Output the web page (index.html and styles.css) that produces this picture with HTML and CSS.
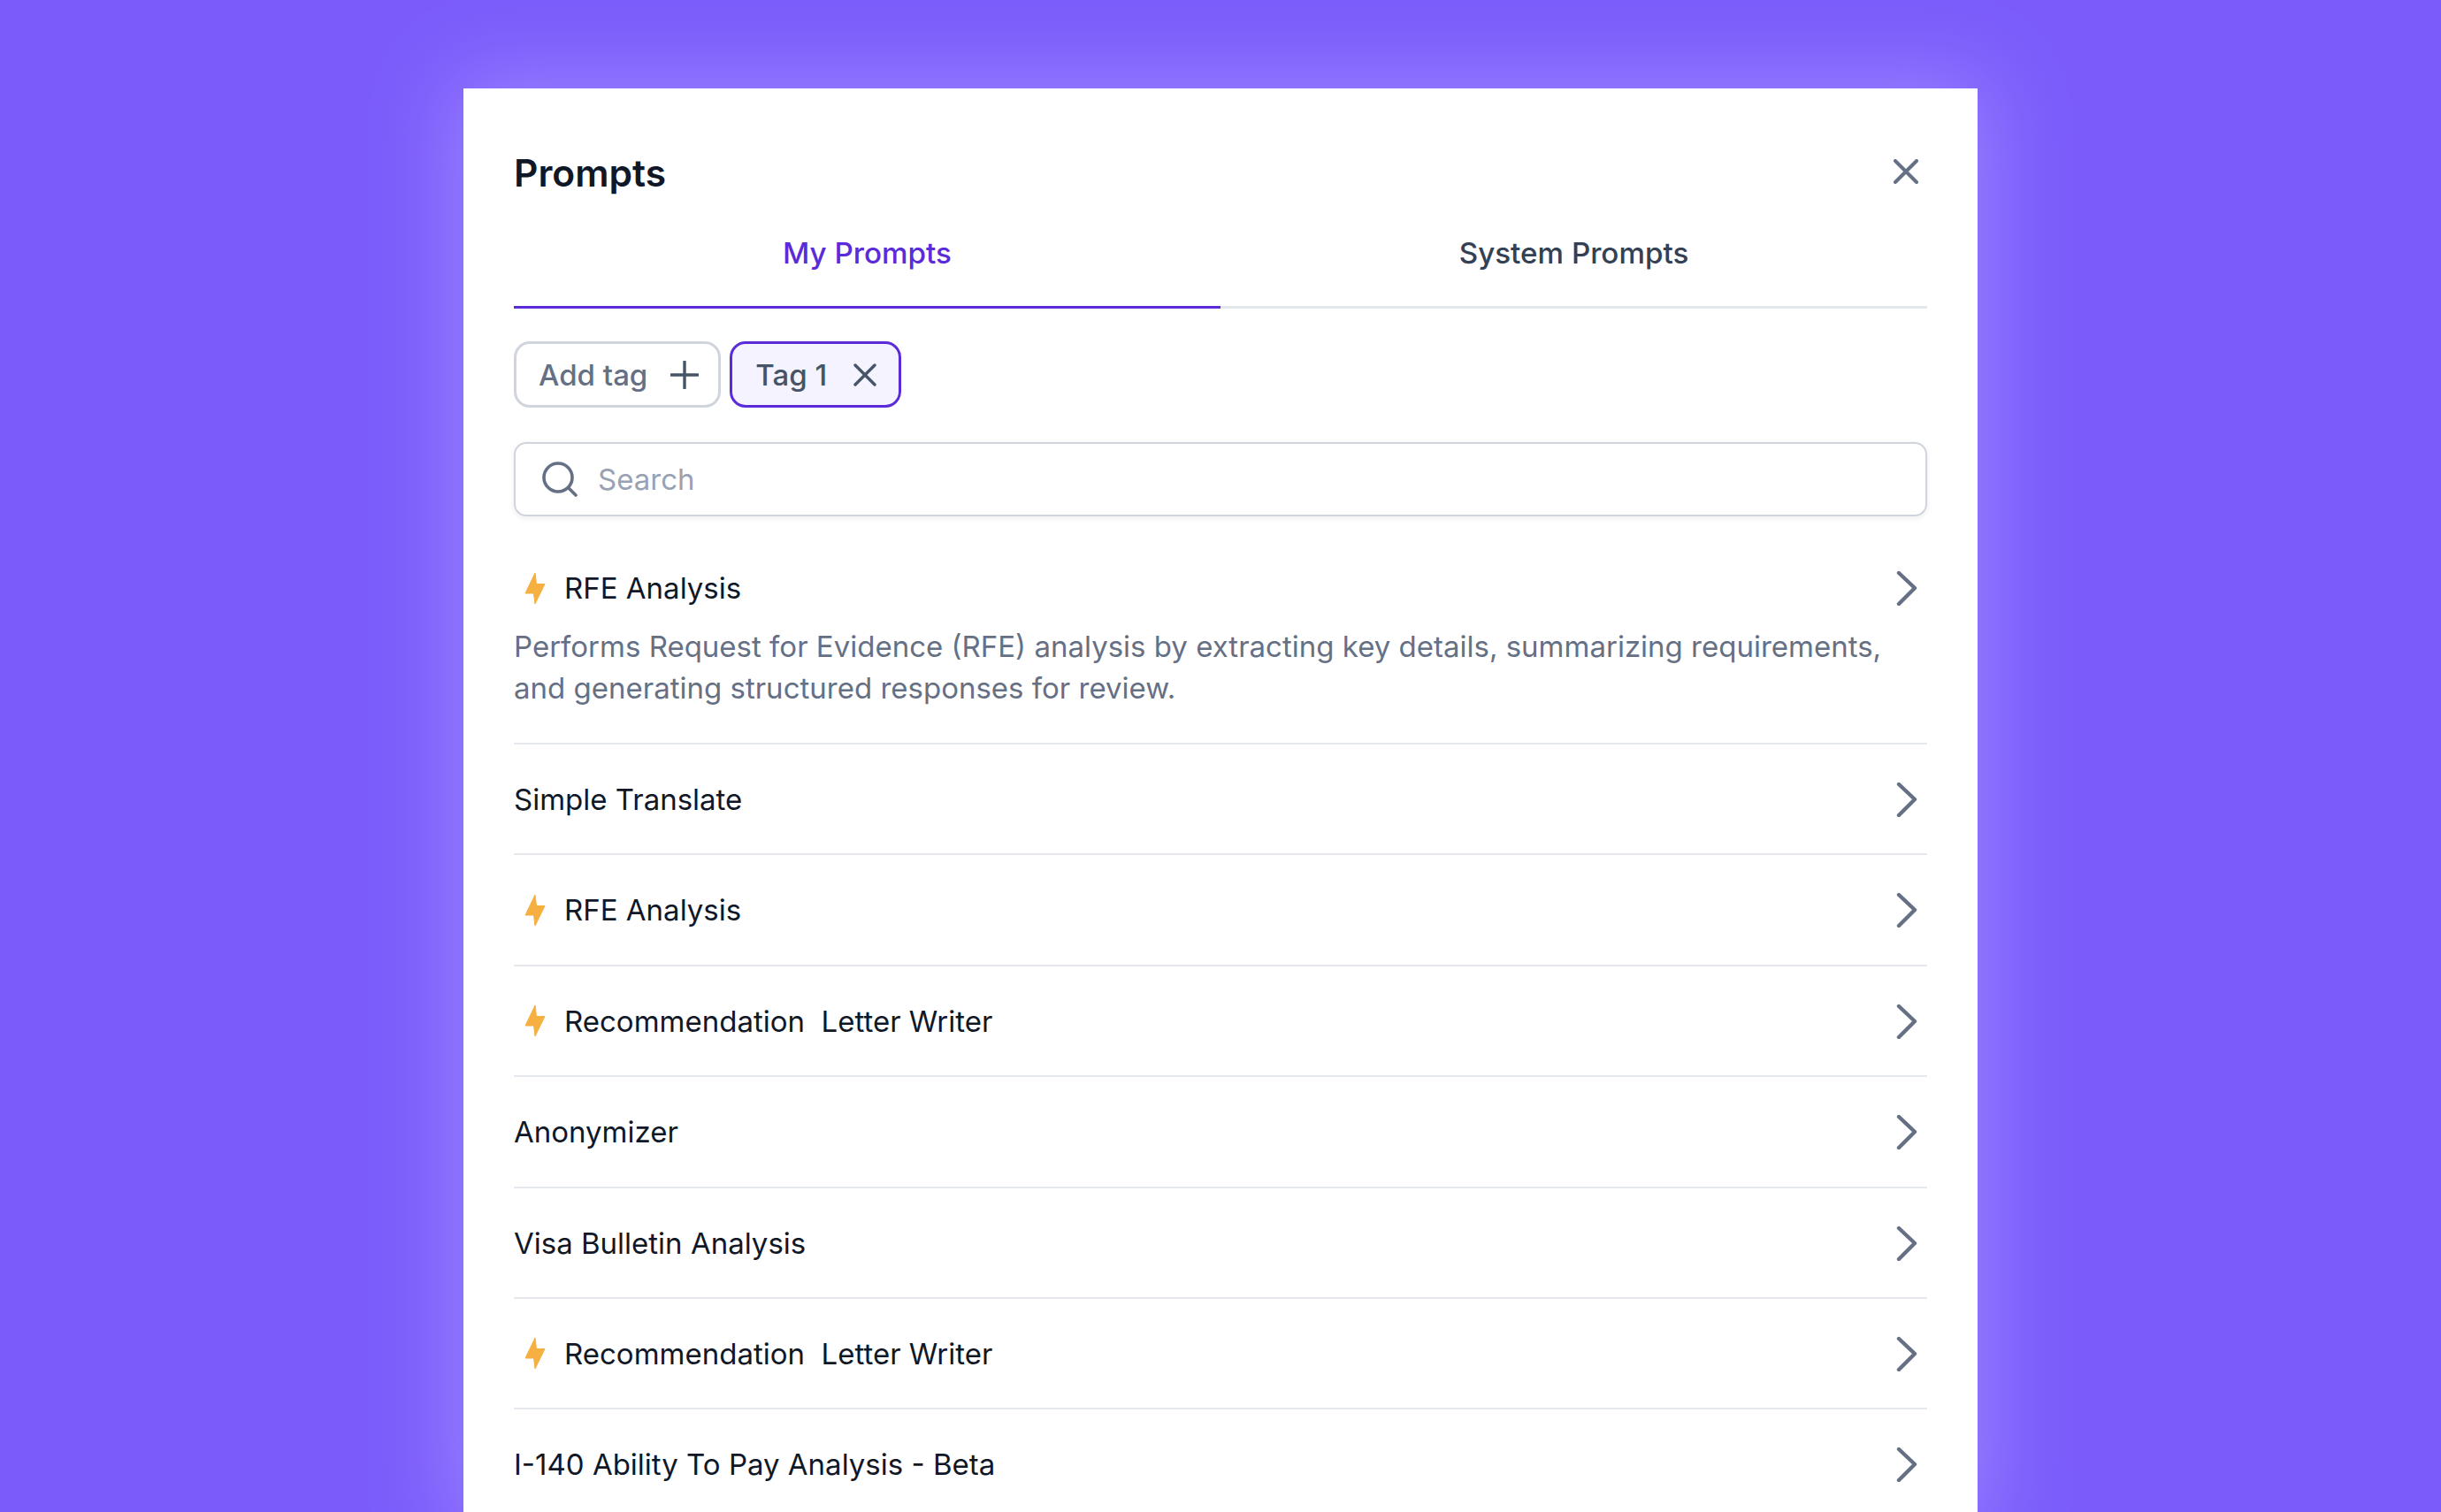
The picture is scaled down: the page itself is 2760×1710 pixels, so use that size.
FILE: index.html
```html
<!DOCTYPE html>
<html lang="en">
<head>
<meta charset="utf-8">
<title>Prompts</title>
<link rel="stylesheet" href="styles.css">
</head>
<body>
<svg class="defs" width="0" height="0" aria-hidden="true">
  <symbol id="chev" viewBox="0 0 40 40"><path d="M11 3 L29 20 L11 38" fill="none" stroke="#667085" stroke-width="4.4" stroke-linecap="round" stroke-linejoin="round"/></symbol>
  <symbol id="bolt" viewBox="0 0 24 37"><path d="M12 1 L13.5 13.5 L23 13.5 L12 36 L10.5 24 L1 24 Z" fill="#F5B041" stroke="#F5B041" stroke-width="1" stroke-linejoin="round"/></symbol>
</svg>
<main class="modal">
  <header class="modal-head">
    <h1 class="modal-title">Prompts</h1>
    <svg class="close" viewBox="0 0 28 28"><path d="M2 2 L26 26 M26 2 L2 26" fill="none" stroke="#667085" stroke-width="4" stroke-linecap="round"/></svg>
  </header>
  <nav class="tabs">
    <div class="tab tab-active">My Prompts</div>
    <div class="tab">System Prompts</div>
  </nav>
  <div class="chips">
    <div class="chip">Add tag
      <svg class="chip-icon" viewBox="0 0 32 32"><path d="M16 1 V31 M1 16 H31" fill="none" stroke="#475467" stroke-width="3.4" stroke-linecap="round"/></svg>
    </div>
    <div class="chip chip-on">Tag 1
      <svg class="chip-icon-x" viewBox="0 0 26 26"><path d="M2 2 L24 24 M24 2 L2 24" fill="none" stroke="#475467" stroke-width="3.4" stroke-linecap="round"/></svg>
    </div>
  </div>
  <div class="search">
    <svg class="search-icon" viewBox="0 0 40 40"><circle cx="18" cy="18" r="16" fill="none" stroke="#667085" stroke-width="3.6"/><path d="M30 30 L38 38" stroke="#667085" stroke-width="3.6" stroke-linecap="round"/></svg>
    <span class="placeholder">Search</span>
  </div>
  <ul class="list">
    <li class="row row-first">
      <div class="row-line"><svg class="bolt"><use href="#bolt"/></svg><span class="row-name">RFE Analysis</span><svg class="chev"><use href="#chev"/></svg></div>
      <p class="row-desc">Performs Request for Evidence (RFE) analysis by extracting key details, summarizing requirements, and generating structured responses for review.</p>
    </li>
    <li class="row"><div class="row-line"><span class="row-name">Simple Translate</span><svg class="chev"><use href="#chev"/></svg></div></li>
    <li class="row"><div class="row-line"><svg class="bolt"><use href="#bolt"/></svg><span class="row-name">RFE Analysis</span><svg class="chev"><use href="#chev"/></svg></div></li>
    <li class="row"><div class="row-line"><svg class="bolt"><use href="#bolt"/></svg><span class="row-name">Recommendation&nbsp; Letter Writer</span><svg class="chev"><use href="#chev"/></svg></div></li>
    <li class="row"><div class="row-line"><span class="row-name">Anonymizer</span><svg class="chev"><use href="#chev"/></svg></div></li>
    <li class="row"><div class="row-line"><span class="row-name">Visa Bulletin Analysis</span><svg class="chev"><use href="#chev"/></svg></div></li>
    <li class="row"><div class="row-line"><svg class="bolt"><use href="#bolt"/></svg><span class="row-name">Recommendation&nbsp; Letter Writer</span><svg class="chev"><use href="#chev"/></svg></div></li>
    <li class="row"><div class="row-line"><span class="row-name">I-140 Ability To Pay Analysis - Beta</span><svg class="chev"><use href="#chev"/></svg></div></li>
  </ul>
</main>
</body>
</html>
```
FILE: styles.css
```css
* { box-sizing: border-box; }
html, body { height: 100%; }
body {
  margin: 0;
  overflow: hidden;
  background: #7B5CFB;
  font-family: Inter, "Liberation Sans", sans-serif;
  padding-top: 100px;
}
.defs { position: absolute; }
.modal {
  width: 1712.5px;
  min-height: 1610px;
  margin: 0 0 0 523.5px;
  padding: 0 57px 0 57.5px;
  background: #fff;
  box-shadow: 0 0 90px 12px #9A82FF;
}
.modal-head {
  display: flex;
  justify-content: space-between;
  align-items: center;
  height: 68px;
  padding-top: 60px;
  box-sizing: content-box;
}
.modal-title {
  margin: 0;
  padding-top: 3px;
  font-size: 42.5px;
  line-height: 68px;
  font-weight: 600;
  color: #101828;
}
.close { width: 28px; height: 28px; margin-right: 10px; }
.tabs {
  display: flex;
  height: 121px;
}
.tab {
  flex: 1;
  text-align: center;
  font-size: 33.2px;
  font-weight: 500;
  color: #344054;
  line-height: 117px;
  border-bottom: 3px solid #E4E7EC;
}
.tab-active { color: #5B2BD9; border-bottom-color: #5B2BD9; }
.chips { display: flex; gap: 10px; margin-top: 37px; }
.chip {
  display: flex;
  align-items: center;
  height: 75px;
  padding: 0 22px 0 25px;
  gap: 26px;
  border: 3px solid #D0D5DD;
  border-radius: 18px;
  font-size: 33px;
  font-weight: 500;
  color: #667085;
}
.chip-on { background: #F4F3FF; border-color: #5B2BD9; color: #475467; gap: 30px; padding: 0 25px 0 26px; }
.chip-icon { width: 32px; height: 32px; }
.chip-icon-x { width: 26px; height: 26px; }
.search {
  display: flex;
  align-items: center;
  height: 84px;
  margin-top: 39px;
  padding-left: 30px;
  gap: 23px;
  border: 2.5px solid #D0D5DD;
  border-radius: 14px;
  box-shadow: 0 2px 6px rgba(16,24,40,.08);
}
.search-icon { width: 40px; height: 40px; }
.placeholder { font-size: 33px; color: #98A2B3; }
.list { list-style: none; margin: 0; padding: 0; }
.row { padding: 42px 0 41.4px; border-bottom: 2px solid #E4E7EC; }
.row-first { margin-top: 19px; padding-bottom: 38px; }
.row-line { display: flex; align-items: center; height: 40px; }
.bolt { width: 24px; height: 37px; margin: 0 21px 0 12px; }
.row-name { flex: 1; font-size: 33px; font-weight: 400; color: #101828; }
.chev { width: 40px; height: 40px; margin-right: 3px; }
.row-desc {
  margin: 23px 0 0;
  font-size: 33px;
  line-height: 47px;
  color: #667085;
}
```
